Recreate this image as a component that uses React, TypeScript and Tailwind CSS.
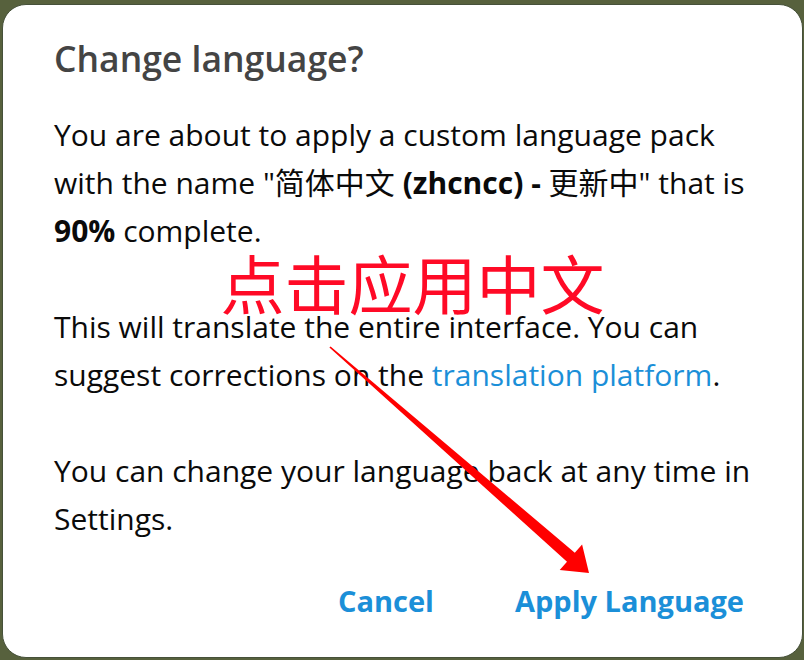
import React from "react";

export default function App() {
  return (
    <div className="relative w-[804px] h-[660px] overflow-hidden bg-[#57613d] pt-[4px] pl-[2px]">
      <div
        className="w-[801px] h-[654px] rounded-[24px] border border-[#46513a] bg-white pl-[51px] pt-[31px]"
        style={{ fontFamily: '"Open Sans", "Noto Sans CJK SC", sans-serif' }}
      >
        <h1 className="text-[35.5px] leading-[44px] font-semibold text-[#444444]">Change language?</h1>
        <div className="mt-[31px] w-[720px] text-[30px] leading-[48px] text-[#0a0a0a]">
          <p>
            You are about to apply a custom language pack with the name "简体中文{" "}
            <span className="font-bold">(zhcncc) -</span> 更新中" that is{" "}
            <span className="font-bold">90%</span> complete.
          </p>
          <p className="mt-[48px]">
            This will translate the entire interface. You can suggest corrections on the{" "}
            <span className="text-[#1b8fd8]">translation platform</span>.
          </p>
          <p className="mt-[48px]">You can change your language back at any time in Settings.</p>
        </div>
        <div className="mt-[34px] flex justify-end gap-[81px] pr-[58px] text-[29px] leading-[48px] font-bold text-[#1b8fd8]">
          <button>Cancel</button>
          <button>Apply Language</button>
        </div>
      </div>

      <div className="absolute left-[205px] top-[242px] w-[415px] h-[73px] bg-white flex justify-center pt-[7px]">
        <span
          className="text-[64px] leading-[64px] text-[#ff0a26]"
          style={{ fontFamily: '"Noto Sans CJK SC", sans-serif' }}
        >
          点击应用中文
        </span>
      </div>

      <svg className="absolute left-0 top-0 pointer-events-none" width="804" height="660" viewBox="0 0 804 660">
        <polygon
          fill="#ff0000"
          points="329.4,347.6 567,561.7 559.7,570 589,573 582.1,544.4 574.8,552.7 330.6,346.4"
        />
      </svg>
    </div>
  );
}
